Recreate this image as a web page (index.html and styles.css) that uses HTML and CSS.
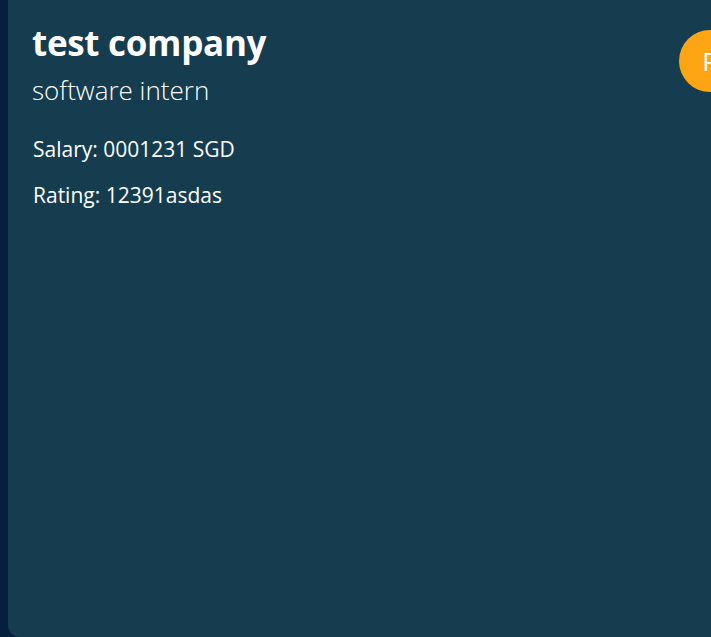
FILE: index.html
```html
<!DOCTYPE html>
<html lang="en">
<head>
<meta charset="utf-8">
<title>Job card</title>
<link rel="stylesheet" href="styles.css">
</head>
<body>
  <main class="page">
    <section class="card">
      <div class="info">
        <h1 class="company">test company</h1>
        <p class="role">software intern</p>
        <p class="detail">Salary: 0001231 SGD</p>
        <p class="detail">Rating: 12391asdas</p>
      </div>
      <div class="avatar">P</div>
    </section>
  </main>
</body>
</html>
```
FILE: styles.css
```css
html, body {
  margin: 0;
  padding: 0;
  height: 100%;
  overflow: hidden;
}
body {
  background: #051f3d;
  font-family: "Open Sans", "Noto Sans", sans-serif;
  color: #ffffff;
}
.page {
  height: 100%;
  padding-left: 8px;
  box-sizing: border-box;
  display: flex;
}
.card {
  flex: 0 0 733px;
  background: #153d4f;
  border-radius: 0 0 0 12px;
  display: flex;
  justify-content: space-between;
  align-items: flex-start;
  padding: 21px 0 0 24px;
  box-sizing: border-box;
}
.info {
  display: flex;
  flex-direction: column;
}
.company {
  margin: 0;
  font-size: 35px;
  font-weight: 700;
  line-height: 44px;
  letter-spacing: -0.3px;
}
.role {
  margin: 7px 0 0;
  font-size: 26px;
  font-weight: 300;
  line-height: 36px;
}
.detail {
  margin: 18px 0 0 1px;
  font-size: 21px;
  line-height: 46px;
}
.detail + .detail {
  margin-top: 0;
}
.avatar {
  flex: 0 0 auto;
  width: 62px;
  height: 62px;
  border-radius: 50%;
  background: #fda512;
  color: #ffffff;
  font-size: 26px;
  display: flex;
  align-items: center;
  justify-content: center;
  margin-top: 9px;
}
```
